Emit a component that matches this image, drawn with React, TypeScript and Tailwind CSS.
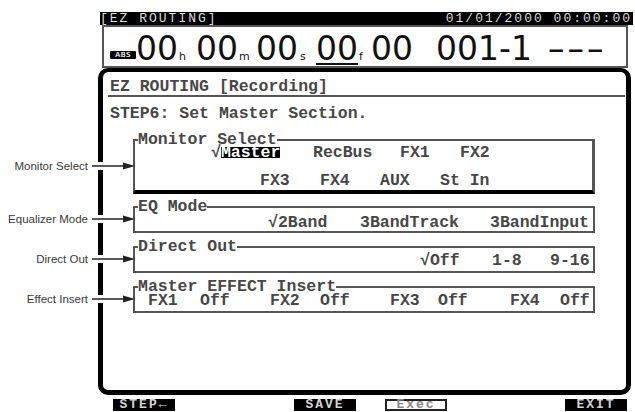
import type { FunctionComponent, ReactNode } from "react";

const LCD = "font-['Liberation_Mono','DejaVu_Sans_Mono',monospace]";

const callouts = [
  { label: "Monitor Select", gap: "mt-0" },
  { label: "Equalizer Mode", gap: "mt-[41px]" },
  { label: "Direct Out", gap: "mt-[28px]" },
  { label: "Effect Insert", gap: "mt-[28px]" },
];

const Arrow: FunctionComponent = () => (
  <svg width="45" height="12" viewBox="0 0 45 12" className="ml-[2px] -mr-[37px] shrink-0">
    <rect x="7" y="2" width="8" height="8" fill="#fff" />
    <line x1="2" y1="6" x2="35" y2="6" stroke="#222" strokeWidth="1.3" />
    <polygon points="33,2.5 45,6 33,9.5" fill="#222" />
  </svg>
);

// one box of the LCD page, the title sits in the top border
const Section: FunctionComponent<{ title: string; className: string; children: ReactNode }> = ({
  title,
  className,
  children,
}) => (
  <fieldset className={`ml-[30px] w-[462px] border-2 border-[#555] ${className}`}>
    <legend className="ml-[3px] leading-[12px]">{title}</legend>
    {children}
  </fieldset>
);

const Item: FunctionComponent<{ w?: string; children: ReactNode }> = ({ w = "", children }) => (
  <span className={`shrink-0 whitespace-pre ${w}`}>{children}</span>
);

const Key: FunctionComponent<{ label: string; gap: string; active?: boolean }> = ({ label, gap, active }) => (
  <div
    className={`${gap} flex h-[12px] w-[62px] items-center justify-center text-[13px] leading-[12px] tracking-[2px] ${
      active ? "border-2 border-[#222] bg-white text-[#888]" : "bg-black text-[#d4d4d4]"
    }`}
  >
    {label}
  </div>
);

const App: FunctionComponent = () => {
  return (
    <div className="flex h-[412px] w-[635px] overflow-hidden bg-white">
      {/* annotations on the left */}
      <div className="relative z-10 flex w-[98px] shrink-0 flex-col pt-[160px]">
        {callouts.map((c) => (
          <div key={c.label} className={`${c.gap} flex h-[12px] items-center justify-end`}>
            <span className="whitespace-nowrap font-['Liberation_Sans',Arial,sans-serif] text-[11.5px] leading-[12px] text-[#3a3a3a]">
              {c.label}
            </span>
            <Arrow />
          </div>
        ))}
      </div>

      {/* device screen */}
      <div className={`w-[537px] shrink-0 pt-[12px] ${LCD}`}>
        <div className="ml-[2px] flex h-[13px] w-[533px] items-center justify-between bg-black pr-[1px] text-[13px] leading-[13px] tracking-[2px] text-[#dcdcdc]">
          <span>[EZ ROUTING]</span>
          <span>01/01/2000 00:00:00</span>
        </div>

        {/* time counter */}
        <div className="ml-[4px] h-[43px] w-[526px] border-2 border-[#555]">
          <div className="flex items-baseline pl-[6px] pt-[4px] font-['DejaVu_Sans',sans-serif] text-[33px] leading-[36px] text-[#111]">
            <span className="mt-[20px] h-[8px] w-[26px] self-start rounded-[1px] bg-black text-center font-['DejaVu_Sans',sans-serif] text-[7px] font-bold leading-[8px] text-[#ccc]">
              ABS
            </span>
            <span className="flex w-[60px] items-baseline">
              00<span className="ml-[1px] text-[11px]">h</span>
            </span>
            <span className="flex w-[60px] items-baseline">
              00<span className="ml-[1px] text-[11px]">m</span>
            </span>
            <span className="flex w-[60px] items-baseline">
              00<span className="ml-[2px] text-[11px]">s</span>
            </span>
            <span className="flex w-[55px] items-baseline">
              <span className="underline decoration-2 underline-offset-[3px]">00</span>
              <span className="ml-[1px] text-[11px]">f</span>
            </span>
            <span>00</span>
            <span className="ml-[23px]">001-1</span>
            <span className="ml-[16px] tracking-[3px]">–––</span>
          </div>
        </div>

        {/* main page */}
        <div className="h-[327px] w-[533px] rounded-[10px] border-[5px] border-t-4 border-black text-[16.5px] font-bold text-[#474747]">
          <div className="ml-[5px] mr-[1px] mt-[6px] border-b-2 border-[#555] pl-[2px] leading-[17px]">
            EZ ROUTING [Recording]
          </div>
          <div className="mt-[8px] pl-[7px] leading-[17px]">STEP6: Set Master Section.</div>

          <Section title="Monitor Select" className="mt-[12px] border-r-[3px] border-b-4 border-b-black pb-[2px]">
            <div className="flex pl-[76px] leading-[14px]">
              <Item w="w-[102px]">
                √
                <span className="inline-block h-[11px] bg-black leading-[11px] text-white">Master</span>
              </Item>
              <Item w="w-[87px]">RecBus</Item>
              <Item w="w-[60px]">FX1</Item>
              <Item>FX2</Item>
            </div>
            <div className="mt-[14px] flex pl-[125px] leading-[14px]">
              <Item w="w-[60px]">FX3</Item>
              <Item w="w-[60px]">FX4</Item>
              <Item w="w-[60px]">AUX</Item>
              <Item>St In</Item>
            </div>
          </Section>

          <Section title="EQ Mode" className="mt-[7px] pb-[1px]">
            <div className="flex pl-[133px] pt-[3px] leading-[14px]">
              <Item w="w-[92px]">√2Band</Item>
              <Item w="w-[130px]">3BandTrack</Item>
              <Item>3BandInput</Item>
            </div>
          </Section>

          <Section title="Direct Out" className="mt-[8px] pb-[3px]">
            <div className="flex pl-[285px] pt-[1px] leading-[14px]">
              <Item w="w-[72px]">√Off</Item>
              <Item w="w-[58px]">1-8</Item>
              <Item>9-16</Item>
            </div>
          </Section>

          <Section title="Master EFFECT Insert" className="mt-[8px] pb-[3px]">
            <div className="flex pl-[13px] pt-[1px] leading-[14px]">
              <Item w="w-[52px]">FX1</Item>
              <Item w="w-[70px]">Off</Item>
              <Item w="w-[50px]">FX2</Item>
              <Item w="w-[70px]">Off</Item>
              <Item w="w-[48px]">FX3</Item>
              <Item w="w-[72px]">Off</Item>
              <Item w="w-[50px]">FX4</Item>
              <Item>Off</Item>
            </div>
          </Section>
        </div>

        {/* function keys */}
        <div className="mt-[4px] flex font-bold">
          <Key label="STEP←" gap="ml-[15px]" />
          <Key label="SAVE" gap="ml-[119px]" />
          <Key label="Exec" gap="ml-[29px]" active />
          <Key label="EXIT" gap="ml-[118px]" />
        </div>
      </div>
    </div>
  );
};

export default App;
